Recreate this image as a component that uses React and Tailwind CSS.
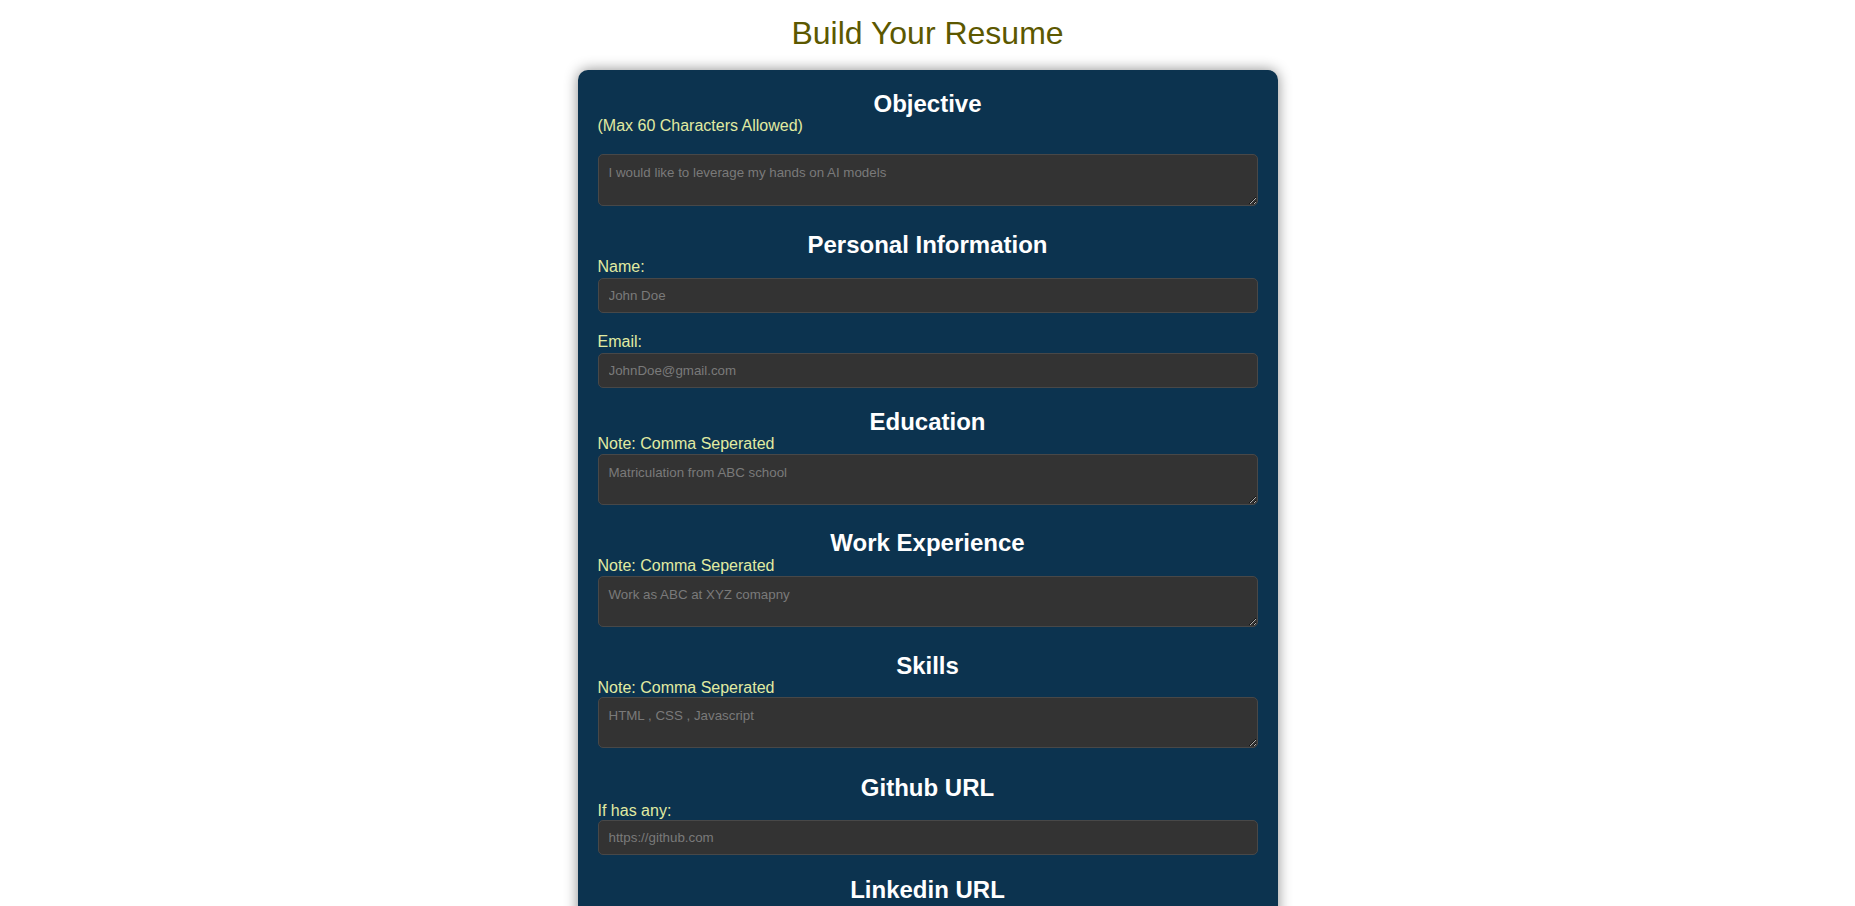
import React, { useState } from "react";

const font = { fontFamily: '"Liberation Sans", Arial, sans-serif' };

function Heading({ children, className = "" }) {
  return (
    <h2 className={`text-center text-[24px] font-bold leading-[26px] text-white ${className}`}>
      {children}
    </h2>
  );
}

function Label({ children, className = "" }) {
  return (
    <label className={`block text-[16px] leading-[18px] text-[#e1eba2] ${className}`}>
      {children}
    </label>
  );
}

const fieldBase =
  "block w-full rounded-[5px] border border-[#484848] bg-[#333333] px-[10px] text-[13.33px] text-white placeholder:text-[#7a7a7a] focus:outline-none";

function Input({ placeholder, value, onChange, type = "text" }) {
  return (
    <input
      type={type}
      placeholder={placeholder}
      value={value}
      onChange={onChange}
      className={`${fieldBase} mt-[2px] h-[35px]`}
    />
  );
}

function TextArea({ placeholder, value, onChange, className = "h-[51px] mt-[1px]" }) {
  return (
    <textarea
      placeholder={placeholder}
      value={value}
      onChange={onChange}
      className={`${fieldBase} py-[10px] leading-[15px] ${className}`}
    />
  );
}

export default function App() {
  const [form, setForm] = useState({
    objective: "",
    name: "",
    email: "",
    education: "",
    work: "",
    skills: "",
    github: "",
    linkedin: "",
  });

  const set = (key) => (e) => setForm({ ...form, [key]: e.target.value });

  return (
    <div className="min-h-screen bg-white pb-10" style={font}>
      <h1 className="pt-[15px] text-center text-[32px] leading-[37px] text-[#5c5800]">
        Build Your Resume
      </h1>

      <div className="mx-auto mt-[18px] w-[700px] rounded-[10px] bg-[#0c334f] px-5 pt-[21px] pb-6 shadow-[0_0_14px_rgba(0,0,0,0.45)]">
        {/* OBJECTIVE */}
        <Heading>Objective</Heading>
        <Label>(Max 60 Characters Allowed)</Label>
        <TextArea
          placeholder="I would like to leverage my hands on AI models"
          value={form.objective}
          onChange={set("objective")}
          className="mt-[19px] h-[52px]"
        />

        {/* PERSONAL */}
        <Heading className="mt-[26px]">Personal Information</Heading>
        <Label>Name:</Label>
        <Input placeholder="John Doe" value={form.name} onChange={set("name")} />
        <Label className="mt-[20px]">Email:</Label>
        <Input
          type="email"
          placeholder="JohnDoe@gmail.com"
          value={form.email}
          onChange={set("email")}
        />

        {/* EDUCATION */}
        <Heading className="mt-[21px]">Education</Heading>
        <Label>Note: Comma Seperated</Label>
        <TextArea
          placeholder="Matriculation from ABC school"
          value={form.education}
          onChange={set("education")}
        />

        {/* WORK */}
        <Heading className="mt-[25px]">Work Experience</Heading>
        <Label className="mt-[1px]">Note: Comma Seperated</Label>
        <TextArea
          placeholder="Work as ABC at XYZ comapny"
          value={form.work}
          onChange={set("work")}
        />

        {/* SKILLS */}
        <Heading className="mt-[26px]">Skills</Heading>
        <Label>Note: Comma Seperated</Label>
        <TextArea
          placeholder="HTML , CSS , Javascript"
          value={form.skills}
          onChange={set("skills")}
          className="h-[51px]"
        />

        {/* GITHUB */}
        <Heading className="mt-[27px]">Github URL</Heading>
        <Label className="mt-[1px]">If has any:</Label>
        <input
          type="text"
          placeholder="https://github.com"
          value={form.github}
          onChange={set("github")}
          className={`${fieldBase} h-[35px]`}
        />

        {/* LINKEDIN */}
        <Heading className="mt-[22px]">Linkedin URL</Heading>
        <Label className="mt-[1px]">If has any:</Label>
        <Input
          placeholder="https://linkedin.com"
          value={form.linkedin}
          onChange={set("linkedin")}
        />

        <button className="mt-6 block w-full rounded-[5px] bg-[#5c5800] py-2 text-[16px] font-bold text-white">
          Generate Resume
        </button>
      </div>
    </div>
  );
}
